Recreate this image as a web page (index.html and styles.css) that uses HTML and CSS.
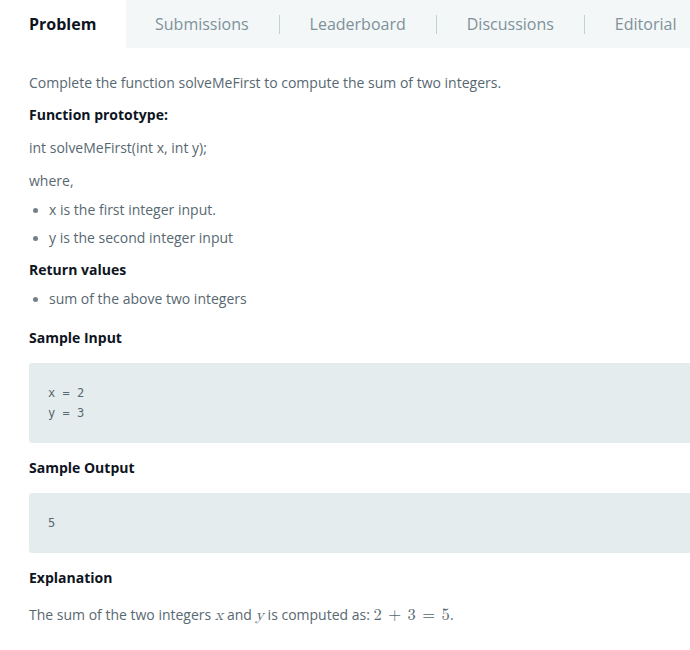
FILE: index.html
```html
<!DOCTYPE html>
<html>
<head>
<meta charset="utf-8">
<link rel="stylesheet" href="styles.css">
</head>
<body>
<div class="page">
  <nav class="tabs">
    <div class="tab active">Problem</div>
    <div class="tab-rest">
      <div class="tab">Submissions</div>
      <span class="sep"></span>
      <div class="tab">Leaderboard</div>
      <span class="sep"></span>
      <div class="tab">Discussions</div>
      <span class="sep"></span>
      <div class="tab">Editorial</div>
    </div>
  </nav>
  <main class="content">
    <p class="text">Complete the function solveMeFirst to compute the sum of two integers.</p>
    <p class="head">Function prototype:</p>
    <p class="text">int solveMeFirst(int x, int y);</p>
    <p class="text where">where,</p>
    <ul class="list">
      <li>x is the first integer input.</li>
      <li>y is the second integer input</li>
    </ul>
    <p class="head rv">Return values</p>
    <ul class="list">
      <li>sum of the above two integers</li>
    </ul>
    <p class="head sec">Sample Input</p>
    <pre class="code code-in">x = 2
y = 3</pre>
    <p class="head sec2">Sample Output</p>
    <pre class="code code-out">5</pre>
    <p class="head sec2">Explanation</p>
    <p class="text expl">The sum of the two integers <span class="math">x</span> and <span class="math">y</span> is computed as: <span class="num">2 + 3 = 5</span>.</p>
  </main>
</div>
</body>
</html>
```
FILE: styles.css
```css
html, body {
  margin: 0;
  padding: 0;
  background: #ffffff;
}
body {
  font-family: "Open Sans", "Noto Sans", sans-serif;
  color: #576871;
}
.page {
  width: 690px;
}
.tabs {
  display: flex;
  height: 48px;
}
.tab {
  font-size: 16px;
  line-height: 48px;
  color: #7f919a;
}
.tab.active {
  width: 126px;
  box-sizing: border-box;
  padding-left: 29px;
  color: #0e141e;
  font-weight: 700;
  background: #fff;
}
.tab-rest {
  flex: 1;
  display: flex;
  align-items: center;
  background: #f3f7f7;
  padding-left: 29px;
}
.sep {
  width: 1px;
  height: 19px;
  background: #c5d0d4;
  margin: 0 30px;
}
.content {
  padding: 25px 0 0 29px;
}
.text {
  margin: 0;
  font-size: 14px;
  line-height: 20px;
  color: #576871;
}
.head {
  margin: 12px 0 0;
  font-size: 14px;
  line-height: 20px;
  font-weight: 700;
  color: #0e141e;
}
.head + .text {
  margin-top: 13px;
}
.text.where {
  margin-top: 13px;
}
.list {
  margin: 9px 0 0;
  padding: 0 0 0 20px;
  font-size: 14px;
  line-height: 20px;
  color: #576871;
}
.list li {
  margin-bottom: 8px;
}
.list li::marker {
  color: #738189;
  font-size: 13px;
}
.head.rv {
  margin-top: 12px;
}
.head.sec {
  margin-top: 19px;
}
.code {
  margin: 0;
  background: #e4eced;
  border-radius: 3px 0 0 3px;
  font-family: "DejaVu Sans Mono", monospace;
  font-size: 12px;
  line-height: 20px;
  color: #576871;
  padding: 20px 19px;
}
.code-in {
  margin-top: 15px;
}
.code-out {
  margin-top: 15px;
}
.head.sec2 {
  margin-top: 15px;
}
.head + .text.expl {
  margin-top: 17px;
}
.math {
  font-family: "Latin Modern Math", "Liberation Serif", serif;
  font-style: italic;
  font-size: 16px;
  line-height: 1;
  color: #576871;
}
.num {
  font-family: "Latin Modern Math", "Liberation Serif", serif;
  font-size: 16.5px;
  line-height: 1;
  color: #576871;
  word-spacing: 1px;
}
```
